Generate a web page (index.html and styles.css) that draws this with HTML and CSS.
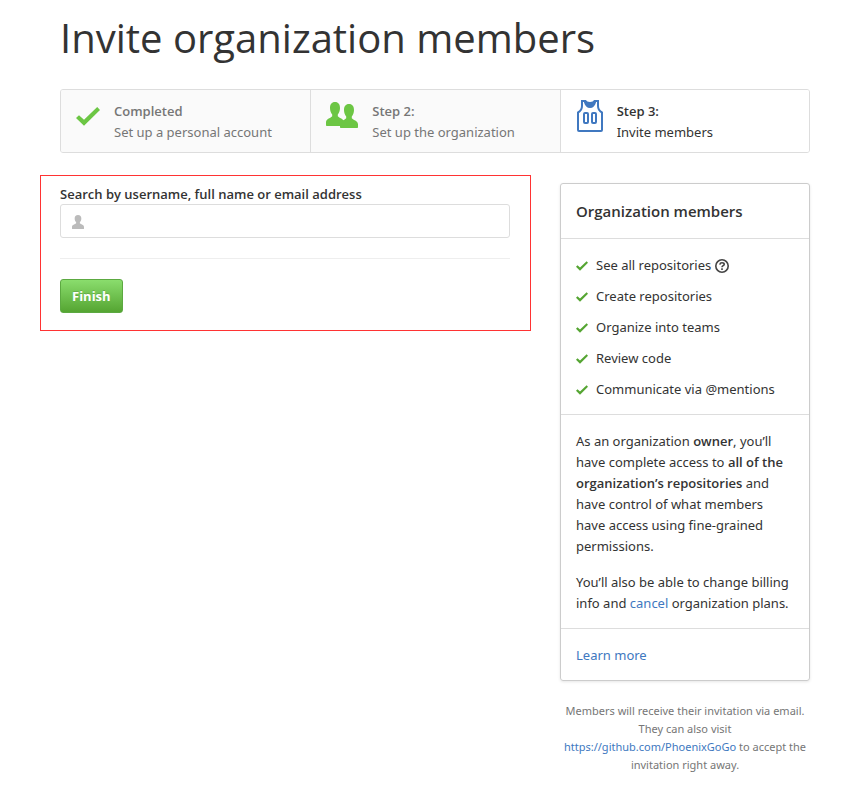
FILE: index.html
```html
<!DOCTYPE html>
<html lang="en">
<head>
<meta charset="utf-8">
<meta name="viewport" content="width=device-width, initial-scale=1">
<title>Invite organization members</title>
<link rel="stylesheet" href="styles.css">
</head>
<body>
<svg class="defs" aria-hidden="true">
  <symbol id="check" viewBox="0 0 24 19"><path d="M0 11 3 8.2 8 12.7 21.2 0 24 3 8 18.8z"/></symbol>
  <symbol id="person" viewBox="0 0 18 24" preserveAspectRatio="none"><path d="M9 0c3.400 0 5 2.400 5 6 0 3-1 5-2.200 6.500v1.800C14 16.500 18 17 18 20.500V23c0 .6-.4 1-1 1H1c-.6 0-1-.4-1-1v-2.500C0 17 4 16.500 6.200 14.300v-1.800C5 11 4 9 4 6c0-3.600 1.600-6 5-6z"/></symbol>
</svg>
<div class="page">
  <h1 class="title">Invite organization members</h1>

  <ol class="steps">
    <li class="step">
      <svg class="step-icon icon-check" aria-hidden="true"><use href="#check"/></svg>
      <div><strong>Completed</strong><span>Set up a personal account</span></div>
    </li>
    <li class="step">
      <svg class="step-icon icon-people" viewBox="0 0 32 26" aria-hidden="true">
        <use href="#person" width="18" height="24"/>
        <use href="#person" x="14" y="2" width="18" height="24"/>
      </svg>
      <div><strong>Step 2:</strong><span>Set up the organization</span></div>
    </li>
    <li class="step current">
      <svg class="step-icon icon-jersey" viewBox="0 0 26 32" aria-hidden="true">
        <path class="line" d="M8 1H5v5c0 3-1 5-4 6.500V30c0 .6.4 1 1 1h22c.6 0 1-.4 1-1V12.500C22 11 21 9 21 6V1h-3"/>
        <path d="M7 0h2c.5 1.200 2 2 4 2s3.500-.8 4-2h2v2.500C18 6 16 8 13 8S8 6 7 2.500z"/>
        <rect class="line" x="7" y="13" width="4" height="10" rx="1"/>
        <rect class="line" x="15" y="13" width="4" height="10" rx="1"/>
      </svg>
      <div><strong>Step 3:</strong><span>Invite members</span></div>
    </li>
  </ol>

  <div class="columns">
    <form class="invite">
      <label for="member">Search by username, full name or email address</label>
      <div class="field">
        <svg class="field-icon" aria-hidden="true"><use href="#person"/></svg>
        <input id="member" type="text" autocomplete="off">
      </div>
      <hr>
      <button type="button">Finish</button>
    </form>

    <aside>
      <div class="card">
        <h2>Organization members</h2>
        <ul class="features">
          <li><svg aria-hidden="true"><use href="#check"/></svg>See all repositories
            <svg class="help" viewBox="0 0 14 14" aria-hidden="true"><circle cx="7" cy="7" r="6.200"/><path d="M4.800 5.600c.2-1.200 1-1.800 2.200-1.800 1.300 0 2.200.6 2.200 1.600C9.200 6.700 7 6.700 7 8.300M7 9.300v1.600"/></svg>
          </li>
          <li><svg aria-hidden="true"><use href="#check"/></svg>Create repositories</li>
          <li><svg aria-hidden="true"><use href="#check"/></svg>Organize into teams</li>
          <li><svg aria-hidden="true"><use href="#check"/></svg>Review code</li>
          <li><svg aria-hidden="true"><use href="#check"/></svg>Communicate via @mentions</li>
        </ul>
        <div class="about">
          <p>As an organization <strong>owner</strong>, you’ll have complete access to <strong>all of the organization’s repositories</strong> and have control of what members have access using fine-grained permissions.</p>
          <p>You’ll also be able to change billing info and <a href="#">cancel</a> organization plans.</p>
        </div>
        <div class="more"><a href="#">Learn more</a></div>
      </div>
      <p class="note">Members will receive their invitation via email. They can also visit <a href="#">https://github.com/PhoenixGoGo</a> to accept the invitation right away.</p>
    </aside>
  </div>
</div>
</body>
</html>
```
FILE: styles.css
```css
* { box-sizing: border-box; }
body {
  margin: 0;
  background: #fff;
  color: #333;
  font: 13px/21px "Noto Sans", "Open Sans", sans-serif;
}
.defs { position: absolute; width: 0; height: 0; }
svg { flex: none; fill: currentColor; }
a { color: #4078c0; text-decoration: none; }
strong, label, h2, button { font-family: "Open Sans", "Noto Sans", sans-serif; }
strong { font-weight: 600; }
.page { padding: 8px 50px 16px 40px; }
.title {
  margin: 0 0 21px 20px;
  font-family: "Open Sans", "Noto Sans", sans-serif;
  font-size: 40px;
  font-weight: 400;
  line-height: 60px;
}

.steps {
  display: grid;
  grid-template-columns: repeat(3, 1fr);
  margin: 0 0 22px 20px;
  padding: 0;
  list-style: none;
  border: 1px solid #ddd;
  border-radius: 3px;
  overflow: hidden;
}
.step {
  display: flex;
  align-items: flex-start;
  padding: 11px 15px 9px;
  background: #fafafa;
  color: #767676;
}
.step + .step { border-left: 1px solid #ddd; }
.step strong, .step span { display: block; }
.step-icon { color: #6cc644; }
.step.current { background: #fff; color: #333; }
.current .step-icon { color: #4078c0; }
.icon-check { width: 24px; height: 19px; margin: 6px 14px 0 0; }
.icon-people { width: 32px; height: 26px; margin: 1px 14px 0 0; }
.icon-jersey { width: 26px; height: 32px; margin: -1px 14px 0 1px; }
.line { fill: none; stroke: currentColor; stroke-width: 2; }

.columns {
  display: grid;
  grid-template-columns: 1fr 250px;
  gap: 29px;
  align-items: start;
}
.invite {
  padding: 8px 20px 17px 19px;
  border: 1px solid #f33;
}
.invite label { display: block; line-height: 20px; font-weight: 600; }
.field { position: relative; }
.field input {
  display: block;
  width: 100%;
  height: 34px;
  padding: 6px 8px 6px 32px;
  border: 1px solid #ddd;
  border-radius: 3px;
  font: inherit;
}
.field-icon {
  position: absolute;
  left: 12px;
  top: 11px;
  width: 12px;
  height: 14px;
  color: #bbb;
}
.invite hr { margin: 20px 0; border: 0; border-top: 1px solid #eee; }
.invite button {
  display: block;
  height: 34px;
  padding: 0 11px;
  border: 1px solid #5ca941;
  border-radius: 3px;
  background: linear-gradient(#8add6d, #55a532);
  color: #fff;
  font-size: 13px;
  font-weight: 700;
  line-height: 20px;
  text-shadow: 0 -1px 0 rgba(0, 0, 0, .15);
}

.card {
  margin-top: 8px;
  border: 1px solid #ccc;
  border-radius: 3px;
  box-shadow: 0 1px 3px rgba(0, 0, 0, .1);
}
.card h2 {
  margin: 0;
  padding: 17px 15px 16px;
  font-size: 15px;
  font-weight: 600;
  line-height: 21px;
}
.features, .about, .more { margin: 0; border-top: 1px solid #ddd; }
.features {
  display: grid;
  gap: 10px;
  padding: 16px 15px 14px;
  list-style: none;
}
.features li { display: flex; align-items: center; }
.features svg { width: 12px; height: 10px; margin: 1px 8px 0 0; color: #55a532; }
.features .help {
  width: 14px;
  height: 14px;
  margin: 1px 0 0 4px;
  fill: none;
  stroke: #444;
  stroke-width: 1.6;
}
.about { padding: 16px 15px 14px; }
.about p { margin: 0; }
.about p + p { margin-top: 15px; }
.more { padding: 16px 15px 14px; }
.note {
  margin: 21px 0 0;
  color: #767676;
  font-size: 11px;
  line-height: 18px;
  text-align: center;
}
```
